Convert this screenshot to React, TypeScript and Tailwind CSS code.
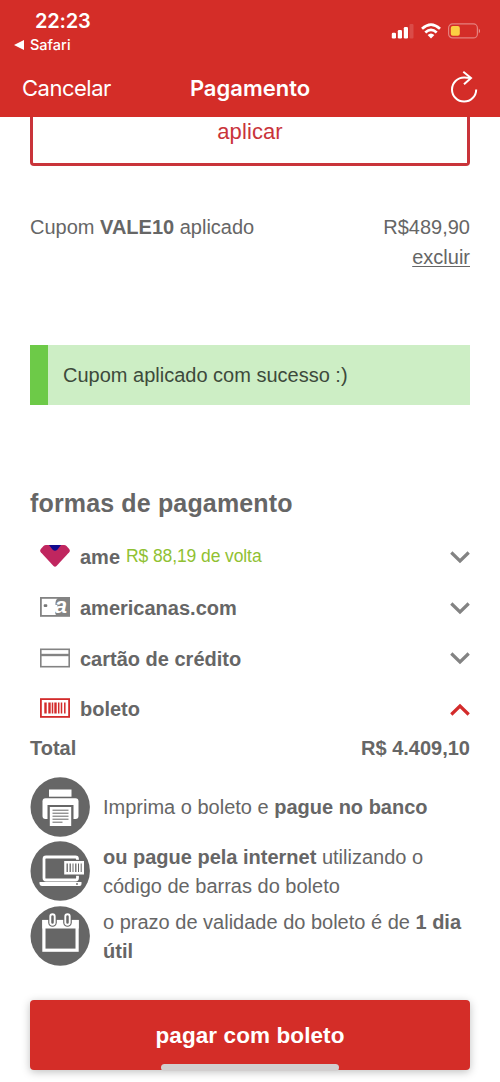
import React from "react";

interface PaymentMethod {
  id: string;
  label: string;
  cashback?: string;
  icon: React.ReactNode;
  open: boolean;
}

function AmeIcon() {
  return (
    <svg width="30" height="24" viewBox="0 0 30 24">
      <path d="M6 1h18q1.500 0 2.500 1l2.700 3q1.300 1.800 0 3.300L16.500 22q-1.500 1.500-3 0L.8 8.300Q-.5 6.800.8 5l2.700-3Q4.500 1 6 1Z" fill="#c0265f" />
      <path d="M9 1h12l-3.500 4.500q-2.500 2.400-5 0Z" fill="#120a8f" />
    </svg>
  );
}

function GiftCardIcon() {
  return (
    <svg width="30" height="20" viewBox="0 0 30 20" className="overflow-visible">
      <rect x="0.900" y="0.900" width="28.200" height="18" fill="#fff" stroke="#838383" strokeWidth="1.800" />
      <path d="M18 1h11v18H17q-2.500-2-1.500-5l2-6h-2Q15 3 18 1Z" fill="#838383" />
      <rect x="3.700" y="7.300" width="3.600" height="2.600" rx="1" fill="#777" />
      <text x="14.800" y="15.800" fontSize="22" fontWeight="700" fontStyle="italic" fill="#fff">
        a
      </text>
    </svg>
  );
}

function CardIcon() {
  return (
    <svg width="30" height="20" viewBox="0 0 30 20" fill="none" stroke="#838383">
      <rect x="0.800" y="1.300" width="28.400" height="17.400" strokeWidth="1.600" />
      <path d="M1 7h28" strokeWidth="2.400" />
    </svg>
  );
}

function BarcodeIcon() {
  return (
    <svg width="30" height="20" viewBox="0 0 30 20" fill="none" stroke="#d32b2b">
      <rect x="0.900" y="1.100" width="28.200" height="17.800" strokeWidth="1.800" />
      <path d="M5.500 4.500v11M9.500 4.500v11M15.500 4.500v11" strokeWidth="2.400" />
      <path d="M12.500 4.500v11M18.700 4.500v11M21.500 4.500v11M24.800 4.500v11" strokeWidth="1.500" />
    </svg>
  );
}

function Chevron({ open }: { open: boolean }) {
  return (
    <svg width="20" height="14" viewBox="0 0 20 14" fill="none" strokeWidth="3.200" stroke={open ? "#d32b2b" : "#838383"}>
      <path d={open ? "M1.300 11.500L10 3L18.700 11.500" : "M1.300 1.500L10 10L18.700 1.500"} />
    </svg>
  );
}

function PrinterIcon() {
  return (
    <svg width="60" height="60" viewBox="-0.500 0 60 60" className="shrink-0">
      <circle cx="29.700" cy="30" r="29.700" fill="#666" />
      <rect x="18.500" y="12.500" width="22.500" height="7.200" fill="#fff" />
      <path d="M15 21.200h30q3 0 3 3V39q0 3-3 3H15q-3 0-3-3V24.200q0-3 3-3Z" fill="#fff" />
      <rect x="17" y="28" width="26" height="16" fill="#666" />
      <rect x="19.300" y="30" width="21.400" height="19" fill="#fff" />
      <path d="M22 33.200h16M22 36.200h16M22 39.200h16M22 42.200h16M22 45.200h10" stroke="#666" strokeWidth="1" />
    </svg>
  );
}

function LaptopIcon() {
  return (
    <svg width="60" height="60" viewBox="-0.500 0 60 60" className="shrink-0">
      <circle cx="29.700" cy="30" r="29.700" fill="#666" />
      <rect x="13.500" y="16" width="33.500" height="23" rx="2" fill="none" stroke="#fff" strokeWidth="2.800" />
      <path d="M9 41h42v2q0 2-2 2H11.500q-2 0-2.500-2Z" fill="#fff" />
      <rect x="32.500" y="18.800" width="22" height="16" fill="#666" />
      <rect x="33.700" y="20" width="19.800" height="13.500" fill="#fff" />
      <path d="M36.700 22.500v8.500M39.700 22.500v8.500M45.300 22.500v8.500" stroke="#666" strokeWidth="1.300" />
      <path d="M42.500 22.500v8.500M48 22.500v8.500M50.700 22.500v8.500" stroke="#666" strokeWidth="1" />
      <circle cx="46.500" cy="43" r="0.900" fill="#666" />
    </svg>
  );
}

function CalendarIcon() {
  return (
    <svg width="60" height="60" viewBox="-0.500 0 60 60" className="shrink-0">
      <circle cx="29.700" cy="30" r="29.700" fill="#666" />
      <rect x="13.400" y="15.500" width="33.200" height="28.700" fill="none" stroke="#fff" strokeWidth="3.200" />
      <path d="M11.800 14h36.400v8.500H11.800Z" fill="#fff" />
      <rect x="17.700" y="6" width="8.600" height="14.800" rx="4.300" fill="#666" />
      <rect x="32.700" y="6" width="8.600" height="14.800" rx="4.300" fill="#666" />
      <rect x="19.800" y="8.300" width="4.400" height="10.500" rx="2.200" fill="#666" stroke="#fff" strokeWidth="1.900" />
      <rect x="34.800" y="8.300" width="4.400" height="10.500" rx="2.200" fill="#666" stroke="#fff" strokeWidth="1.900" />
    </svg>
  );
}

const methods: PaymentMethod[] = [
  { id: "ame", label: "ame", cashback: "R$ 88,19 de volta", icon: <AmeIcon />, open: false },
  { id: "americanas", label: "americanas.com", icon: <GiftCardIcon />, open: false },
  { id: "cartao", label: "cartão de crédito", icon: <CardIcon />, open: false },
  { id: "boleto", label: "boleto", icon: <BarcodeIcon />, open: true },
];

export default function App() {
  return (
    <main className="relative flex h-[1082px] w-[500px] flex-col overflow-hidden bg-white font-['Liberation_Sans',sans-serif] text-[20px] leading-[29px] text-[#666666]">
      {/* Header */}
      <header className="h-[117px] shrink-0 bg-[#d42d28] font-['Inter',sans-serif] text-white">
        <div className="flex h-[59px] justify-between pt-[10px] pr-[19px] pl-[14px]">
          <div>
            <div className="pl-[21px] text-[20px] leading-[22px] font-semibold tracking-[-0.2px]">22:23</div>
            <div className="flex items-center gap-[6px] pt-[4px] text-[14.500px] leading-[18px] font-medium">
              <svg width="10" height="10" viewBox="0 0 10 10">
                <path d="M0 5L10 0V10Z" fill="#fff" />
              </svg>
              <span>Safari</span>
            </div>
          </div>
          <div className="flex h-[42px] items-center gap-[7px]">
            <svg width="23" height="16" viewBox="0 0 23 16" fill="#fff">
              <rect x="0.800" y="9.800" width="4.200" height="5.700" rx="1.200" />
              <rect x="6.800" y="7" width="4.200" height="8.500" rx="1.200" />
              <rect x="12.800" y="4" width="4.200" height="11.500" rx="1.200" />
              <rect x="18.500" y="1" width="4" height="14.500" rx="1" opacity="0.150" />
            </svg>
            <svg width="20" height="16" viewBox="0 0 20 16" fill="none" stroke="#fff" strokeWidth="2.700">
              <path d="M1 5.800Q10-2.500 19 5.800M4.300 9.500Q10 4.200 15.700 9.500" />
              <path d="M6.600 12Q10 8.900 13.400 12L10 15.500Z" fill="#fff" stroke="none" />
            </svg>
            <svg width="33" height="16" viewBox="0 0 33 16">
              <rect x="0.600" y="0.900" width="28.800" height="14" rx="4" fill="none" stroke="#fff" strokeOpacity="0.400" strokeWidth="1.200" />
              <rect x="2.800" y="3" width="9" height="9.800" rx="2" fill="#fbd043" />
              <path d="M30.800 5.500q2.400 2.500 0 5Z" fill="#fff" opacity="0.500" />
            </svg>
          </div>
        </div>
        <div className="grid h-[58px] grid-cols-3 items-center pr-[22px] pl-[22px] text-[22px]">
          <span className="tracking-[-0.5px]">Cancelar</span>
          <span className="text-center font-semibold">Pagamento</span>
          <svg width="28" height="34" viewBox="0 0 28 34" fill="none" stroke="#fff" strokeWidth="2" className="justify-self-end">
            <path d="M26.200 18.500A12.100 12.100 0 1 1 14.100 6.400Q17.500 6.400 20.500 7" />
            <path d="M13.300 0.800L21 7L14 13.300" />
          </svg>
        </div>
      </header>

      <div className="flex flex-col px-[30px]">
        <button className="h-[49px] rounded-b-[4px] border-x-[3px] border-b-[3px] border-[#c9343a] pb-[18px] text-[22px] tracking-[0.1px] text-[#c9343a]">
          aplicar
        </button>

        {/* Coupon */}
        <div className="mt-[47px] flex justify-between">
          <p>
            Cupom <strong>VALE10</strong> aplicado
          </p>
          <div className="text-right">
            <p>R$489,90</p>
            <p className="pt-px">
              <a className="underline decoration-1 underline-offset-2">excluir</a>
            </p>
          </div>
        </div>
        <div className="mt-[73px] flex h-[60px] items-center border-l-[18px] border-[#6dca48] bg-[#cdeec5] pl-[15px] text-[#3d4a3b]">
          Cupom aplicado com sucesso :)
        </div>

        {/* Payment methods */}
        <h2 className="mt-[80px] text-[25px] leading-[36px] font-bold tracking-[0.15px]">formas de pagamento</h2>
        <ul className="mt-[11px]">
          {methods.map((method) => (
            <li key={method.id} className="flex h-[50.700px] items-center pl-[10px]">
              <span className="pb-[2px]">{method.icon}</span>
              <strong className="pt-px pl-[10px]">{method.label}</strong>
              {method.cashback && (
                <span className="pb-px pl-[6px] text-[17.500px] tracking-[-0.1px] text-[#90c132]">
                  {method.cashback}
                </span>
              )}
              <span className="ml-auto pt-px">
                <Chevron open={method.open} />
              </span>
            </li>
          ))}
        </ul>
        <div className="-mt-px flex justify-between font-bold">
          <span>Total</span>
          <span>R$ 4.409,10</span>
        </div>

        <div className="mt-[14px] flex flex-col gap-[4px]">
          <div className="flex h-[60px] items-center gap-[13px]">
            <PrinterIcon />
            <p className="pt-[2px]">
              Imprima o boleto e <strong>pague no banco</strong>
            </p>
          </div>
          <div className="flex h-[61px] items-center gap-[13px]">
            <LaptopIcon />
            <p className="pt-[2px]">
              <strong>ou pague pela internet</strong> utilizando o
              <br />
              código de barras do boleto
            </p>
          </div>
          <div className="flex h-[61px] items-center gap-[13px]">
            <CalendarIcon />
            <p className="pt-[2px]">
              o prazo de validade do boleto é de <strong>1 dia</strong>
              <br />
              <strong>útil</strong>
            </p>
          </div>
        </div>

        <button className="mt-[33px] h-[70px] rounded-[4px] bg-[#d42d28] pt-px text-[22.500px] font-bold tracking-[0.1px] text-white shadow-[0_2px_8px_rgba(0,0,0,0.25)]">
          pagar com boleto
        </button>
      </div>

      {/* Home indicator */}
      <div className="absolute top-[1064px] left-[161px] h-[7px] w-[178px] rounded-full bg-[#d2cfcf]" />
    </main>
  );
}
